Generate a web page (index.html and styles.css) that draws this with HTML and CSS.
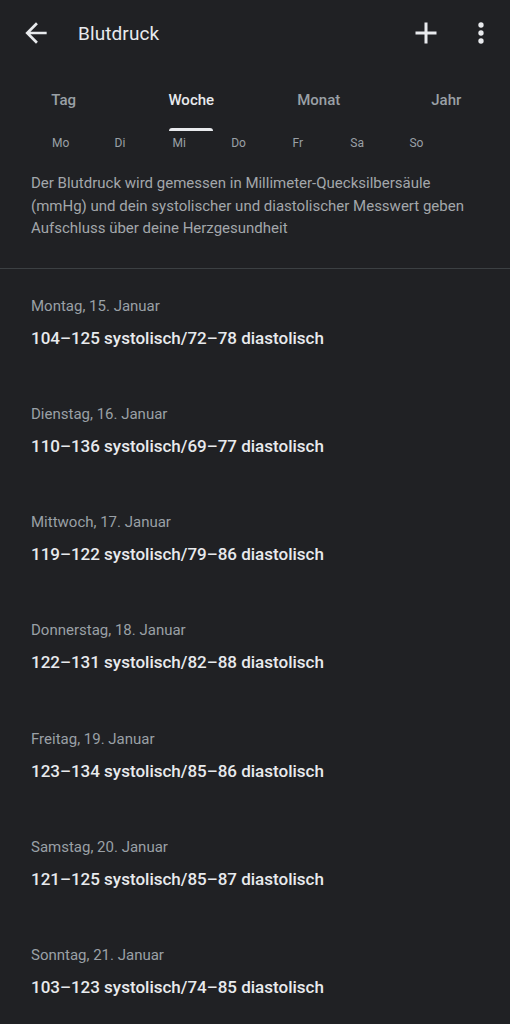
FILE: index.html
```html
<!DOCTYPE html>
<html lang="de">
<head>
<meta charset="utf-8">
<link rel="stylesheet" href="styles.css">
</head>
<body>
<div class="app">
  <header class="topbar">
    <svg class="icon back" viewBox="0 0 24 24" width="32" height="32"><path d="M20 11H7.83l5.59-5.59L12 4l-8 8 8 8 1.41-1.41L7.83 13H20v-2z" fill="#e8eaed"/></svg>
    <h1 class="title">Blutdruck</h1>
    <span class="spacer"></span>
    <svg class="icon add" viewBox="0 0 24 24" width="36" height="36"><path d="M19 13h-6v6h-2v-6H5v-2h6V5h2v6h6v2z" fill="#e8eaed"/></svg>
    <svg class="icon more" viewBox="0 0 24 24" width="32" height="32"><circle cx="12" cy="6" r="2" fill="#e8eaed"/><circle cx="12" cy="12" r="2" fill="#e8eaed"/><circle cx="12" cy="18" r="2" fill="#e8eaed"/></svg>
  </header>
  <nav class="tabs">
    <div class="tab">Tag</div>
    <div class="tab active">Woche<span class="indicator"></span></div>
    <div class="tab">Monat</div>
    <div class="tab">Jahr</div>
  </nav>
  <div class="days">
    <span>Mo</span><span>Di</span><span>Mi</span><span>Do</span><span>Fr</span><span>Sa</span><span>So</span>
  </div>
  <p class="desc">Der Blutdruck wird gemessen in Millimeter-Quecksilbersäule (mmHg) und dein systolischer und diastolischer Messwert geben Aufschluss über deine Herzgesundheit</p>
  <div class="divider"></div>
  <ul class="list">
    <li class="entry"><div class="date">Montag, 15. Januar</div><div class="value">104–125 systolisch/72–78 diastolisch</div></li>
    <li class="entry"><div class="date">Dienstag, 16. Januar</div><div class="value">110–136 systolisch/69–77 diastolisch</div></li>
    <li class="entry"><div class="date">Mittwoch, 17. Januar</div><div class="value">119–122 systolisch/79–86 diastolisch</div></li>
    <li class="entry"><div class="date">Donnerstag, 18. Januar</div><div class="value">122–131 systolisch/82–88 diastolisch</div></li>
    <li class="entry"><div class="date">Freitag, 19. Januar</div><div class="value">123–134 systolisch/85–86 diastolisch</div></li>
    <li class="entry"><div class="date">Samstag, 20. Januar</div><div class="value">121–125 systolisch/85–87 diastolisch</div></li>
    <li class="entry"><div class="date">Sonntag, 21. Januar</div><div class="value">103–123 systolisch/74–85 diastolisch</div></li>
  </ul>
</div>
</body>
</html>
```
FILE: styles.css
```css
* { box-sizing: border-box; }
html, body { margin: 0; padding: 0; background: #202124; }
body { font-family: Roboto, "Noto Sans", sans-serif; color: #e8eaed; }
.app { width: 510px; min-height: 1024px; background: #202124; overflow: hidden; }

.topbar { height: 66px; display: flex; align-items: center; padding: 0 0 0 20px; }
.icon { display: block; flex: none; }
.back { margin-right: 26px; }
.title { margin: 0; font-size: 19px; font-weight: 400; color: #e8eaed; letter-spacing: 0.1px; }
.spacer { flex: 1; }
.add { margin-right: 21px; }
.more { margin-right: 13px; }

.tabs { display: grid; grid-template-columns: repeat(4, 1fr); height: 65px; }
.tab { position: relative; display: flex; align-items: center; justify-content: center; padding-top: 3px; font-size: 15px; font-weight: 500; color: #9aa0a6; }
.tab.active { color: #e8eaed; }
.indicator { position: absolute; bottom: 0; left: 50%; width: 44px; margin-left: -22px; height: 3px; background: #e8eaed; border-radius: 3px 3px 0 0; }

.days { display: grid; grid-template-columns: repeat(7, 59.3px); padding-left: 31px; height: 24px; align-items: center; font-size: 12px; color: #9aa0a6; }
.days span { text-align: center; }

.desc { margin: 17px 34px 0 31px; font-size: 15px; line-height: 22.5px; color: #a3a7ab; padding-bottom: 28px; }
.divider { height: 1px; background: #3c4043; }

.list { list-style: none; margin: 0; padding: 27px 0 0 0; }
.entry { padding: 0 31px; height: 108.3px; }
.date { font-size: 15px; line-height: 20px; color: #9aa0a6; }
.value { margin-top: 10px; font-size: 17px; line-height: 24px; font-weight: 500; color: #e8eaed; }
```
